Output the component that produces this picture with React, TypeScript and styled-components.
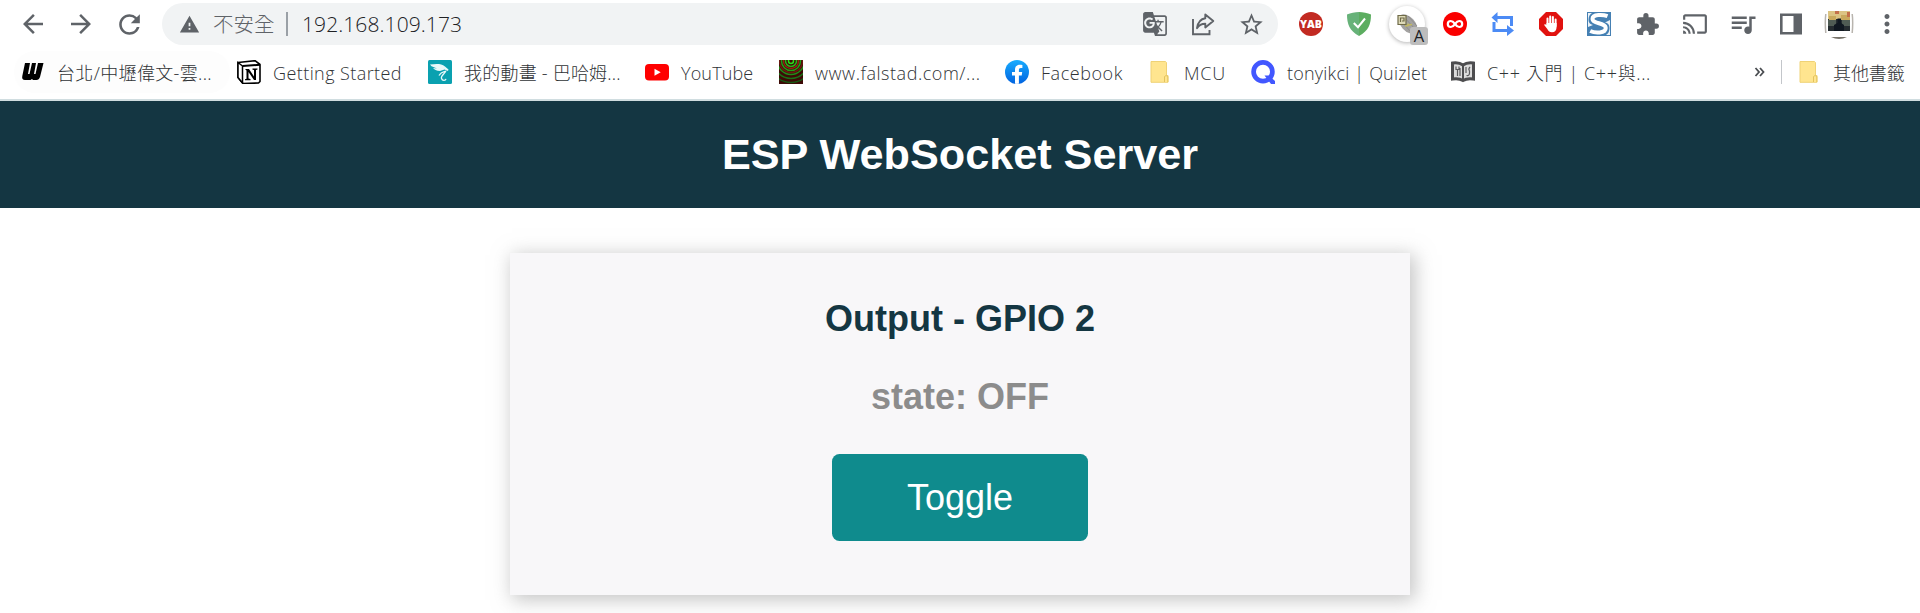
import React from 'react';
import styled, { createGlobalStyle } from 'styled-components';
import {
  MdArrowBack,
  MdArrowForward,
  MdRefresh,
  MdWarning,
  MdGTranslate,
  MdStarBorder,
  MdExtension,
  MdCast,
  MdQueueMusic,
  MdMoreVert,
} from 'react-icons/md';

const GlobalStyle = createGlobalStyle`
  * { box-sizing: border-box; }
  html, body { margin: 0; background: #fff; overflow: hidden; }
`;

const uiFont = `'Open Sans', 'Noto Sans CJK TC', sans-serif`;
const pageFont = `'Liberation Sans', Arial, sans-serif`;

const Window = styled.div`
  width: 1920px;
  height: 613px;
  display: flex;
  flex-direction: column;
  background: #fff;
  overflow: hidden;
`;

const Toolbar = styled.div`
  height: 48px;
  flex: none;
  display: flex;
  align-items: flex-start;
  padding-left: 9px;
  color: #5f6368;
`;

const ToolButton = styled.div`
  width: 48px;
  height: 48px;
  flex: none;
  display: flex;
  align-items: center;
  justify-content: center;
  svg { display: block; flex: none; }
`;

const AddressBar = styled.div`
  width: 1116px;
  height: 42px;
  flex: none;
  margin: 3px 9px 0 9px;
  padding-left: 17px;
  border-radius: 21px;
  background: #f1f3f4;
  display: flex;
  align-items: center;
`;

const SecurityText = styled.span`
  margin-left: 13px;
  width: 62px;
  font: 300 20.5px/40px ${uiFont};
  color: #5f6368;
  white-space: nowrap;
`;

const AddressDivider = styled.span`
  width: 2px;
  height: 24px;
  margin: 0 14px 0 11px;
  background: #9aa0a6;
`;

const Address = styled.span`
  flex: 1;
  font: 300 21px/40px ${uiFont};
  letter-spacing: 0.08px;
  color: #202124;
  white-space: nowrap;
`;

const BarActions = styled.div`
  display: flex;
  margin-right: 3px;
  height: 42px;
  align-items: center;
`;

const BookmarksBar = styled.div`
  height: 51px;
  flex: none;
  display: flex;
  align-items: center;
  padding-left: 14px;
  padding-bottom: 3px;
`;

const Bookmark = styled.div<{ $width: number; $active?: boolean }>`
  width: ${p => p.$width}px;
  height: 42px;
  flex: none;
  display: flex;
  align-items: center;
  gap: 12px;
  padding-left: 7px;
  border-radius: 21px;
  background: ${p => (p.$active ? '#fdfdfd' : 'transparent')};
  svg { display: block; flex: none; }
`;

const BookmarkLabel = styled.span<{ $spacing?: number }>`
  padding-top: 2px;
  font: 300 18px/30px ${uiFont};
  letter-spacing: ${p => p.$spacing ?? 0}px;
  color: #303336;
  white-space: nowrap;
`;

const Overflow = styled.div`
  width: 27px;
  margin-left: auto;
  svg { display: block; }
`;

const BarDivider = styled.div`
  width: 1px;
  height: 24px;
  margin-right: 8px;
  background: #c3c6ca;
`;

const Hairline = styled.div`
  height: 2px;
  flex: none;
  background: #d0dde0;
`;

const TopNav = styled.header`
  height: 107px;
  flex: none;
  display: flex;
  align-items: center;
  justify-content: center;
  background: #143642;
`;

const Title = styled.h1`
  margin: 0;
  padding-bottom: 2px;
  font: bold 43.2px/50px ${pageFont};
  color: #fff;
`;

const Content = styled.main`
  padding-top: 45px;
  display: flex;
  justify-content: center;
`;

const Card = styled.section`
  width: 900px;
  height: 342px;
  padding-top: 45px;
  display: flex;
  flex-direction: column;
  align-items: center;
  background: #f8f7f9;
  box-shadow: 3px 3px 18px 1.5px rgba(140, 140, 140, 0.5);
`;

const CardTitle = styled.h2`
  margin: 0;
  font: bold 36px/41px ${pageFont};
  color: #143642;
`;

const State = styled.p`
  margin: 37px 0 0;
  font: bold 36px/41px ${pageFont};
  color: #8c8c8c;
`;

const ToggleButton = styled.button`
  width: 256px;
  height: 87px;
  margin-top: 37px;
  padding: 0 0 1px;
  border: 0;
  border-radius: 7.5px;
  background: #0f8b8d;
  color: #fff;
  font: 36px/41px ${pageFont};
`;

const ExtensionBadge = styled.div`
  position: relative;
  width: 36px;
  height: 36px;
  display: flex;
  align-items: center;
  justify-content: center;
  border-radius: 50%;
  background: #fff;
  box-shadow: 0 1px 4px rgba(0, 0, 0, 0.3);
`;

const BadgeLetter = styled.span`
  position: absolute;
  left: 21px;
  top: 21px;
  width: 18px;
  height: 18px;
  border-radius: 3px;
  background: #bdbdbd;
  color: #202124;
  font: 16.5px/18px ${uiFont};
  text-align: center;
`;

const ShareIcon = () => (
  <svg width="24" height="24" viewBox="0 0 24 24" fill="none" stroke="#5f6368" strokeWidth="1.9">
    <path d="M2 7V22.2H18.5V18" />
    <path d="M14.3 2.5L22.3 9L14.3 15.5V11.8C10.5 11.8 8 13 6 16.2C6.8 10.8 9.3 7 14.3 6.3Z" strokeLinejoin="round" />
  </svg>
);

const YabIcon = () => (
  <svg width="24" height="24" viewBox="0 0 24 24">
    <circle cx="12" cy="12" r="12" fill="#c22a22" />
    <text x="12" y="16" textAnchor="middle" textLength="22" lengthAdjust="spacingAndGlyphs" fontFamily="Open Sans, sans-serif" fontWeight="800" fontSize="10.5" fill="#fff">YAB</text>
  </svg>
);

const ShieldIcon = () => (
  <svg width="24" height="24" viewBox="0 0 24 24">
    <path d="M12 0C8 0 3.500 1 0 2.500C0 12 2.500 19 12 24Z" fill="#67b279" />
    <path d="M12 0C16 0 20.500 1 24 2.500C24 12 21.500 19 12 24Z" fill="#5cad60" />
    <path d="M6.800 11L11 15.200L18 6.500" fill="none" stroke="#fff" strokeWidth="2" />
  </svg>
);

const CircuitIcon = () => (
  <svg width="24" height="24" viewBox="0 0 24 24">
    <ellipse cx="13" cy="12" rx="11.500" ry="7" transform="rotate(48 13 12)" fill="#a3a2a1" />
    <path d="M9 5L20 17M13 4L22 14M7 10L16 20" stroke="#8a8886" strokeWidth="0.800" />
    <path d="M3 3.500H11V12.500H3Z" fill="#dedab8" stroke="#6f6b48" strokeWidth="1.200" />
    <path d="M5.500 10V6H9V9H7" fill="none" stroke="#6f6b48" strokeWidth="1.200" />
    <path d="M10 14L13 13.500V11.500M13 13L17 12.500" fill="none" stroke="#c2b963" strokeWidth="1.500" />
  </svg>
);

const InfinityIcon = () => (
  <svg width="24" height="24" viewBox="0 0 24 24">
    <circle cx="12" cy="12" r="12" fill="#fa0000" />
    <path d="M12 12C10.500 9.900 9.300 9 7.800 9A3 3 0 0 0 7.800 15C9.300 15 10.500 14.100 12 12C13.500 9.900 14.700 9 16.200 9A3 3 0 0 1 16.200 15C14.700 15 13.500 14.100 12 12Z" fill="none" stroke="#fff" strokeWidth="2.200" />
  </svg>
);

const LoopIcon = () => (
  <svg width="24" height="24" viewBox="0 0 24 24" fill="none" stroke="#4c8bf5" strokeWidth="3">
    <path d="M5 5.500H20.500V14M3 10V18.500H17" />
    <path d="M6.500 0V11L0.500 5.500ZM16 13V24L23 18.500Z" fill="#4c8bf5" stroke="none" />
  </svg>
);

const StopHandIcon = () => (
  <svg width="24" height="24" viewBox="0 0 24 24">
    <path d="M7 0H17L24 7V17L17 24H7L0 17V7Z" fill="#e1120f" />
    <g stroke="#fff" strokeWidth="2" strokeLinecap="round">
      <path d="M8.500 13V6.500M11.200 12V4.500M13.900 12V5M16.600 14V7.500" />
    </g>
    <path d="M7.500 11H17.600V15C17.600 18.500 15.800 20.300 13 20.300C10.500 20.300 9.600 19.200 8.300 17L5 12.800C5.500 11.800 6.800 12 7.500 13Z" fill="#fff" />
  </svg>
);

const SIcon = () => (
  <svg width="24" height="24" viewBox="0 0 24 24">
    <rect width="24" height="24" fill="#4580b3" />
    <path d="M1 1H5Q1.500 3 1.500 8Q1.500 12 6 13L1 15ZM23 23H19Q22.500 21 22.500 16Q22.500 11 18 10.500L23 8Z" fill="#fff" opacity="0.900" />
    <path d="M20.500 4.200C16.500 2.600 5.500 1.700 5.500 7C5.500 12.300 18.700 10.300 18.700 16C18.700 21.500 8 21.300 3.200 19" fill="none" stroke="#fff" strokeWidth="4" />
  </svg>
);

const PanelIcon = () => (
  <svg width="22" height="22" viewBox="0 0 22 22">
    <path d="M1.300 1.800H20.700V20.200H1.300Z" fill="none" stroke="#5f6368" strokeWidth="2.600" />
    <rect x="13.500" y="1" width="7.500" height="20" fill="#5f6368" />
  </svg>
);

const AvatarIcon = () => (
  <svg width="30" height="32" viewBox="0 0 30 32">
    <path d="M1.800 6Q0.800 14 1.800 25M28.200 6Q29.200 14 28.200 25" fill="none" stroke="#b8b4ae" strokeWidth="1.500" />
    <path d="M7 29Q15 33 23 29Z" fill="#77736a" />
    <rect x="4" y="3" width="22" height="20" fill="#252c30" />
    <rect x="4" y="3" width="22" height="8" fill="#dcc483" />
    <path d="M5 8H12V12H5ZM17 7H26V12H17Z" fill="#c9a95c" />
    <path d="M4 12H12V18H4ZM18 12H26V18H18Z" fill="#505c54" />
    <path d="M10 23V17L13.500 15V10.500H17V15L20 17V23Z" fill="#101821" />
    <path d="M11 3H15V6H11ZM23 4H26V9H23Z" fill="#c4704a" />
  </svg>
);

const SlantedWIcon = () => (
  <svg width="24" height="24" viewBox="0 0 24 24">
    <path d="M4 3H9L7 14H8.500L11 3H15L13 14H14.500L17 3H22.500L19 17Q18 20 15.500 20H12L11 19L9.500 20H4Q0.500 20 1.300 16Z" fill="#000" />
  </svg>
);

const NotionIcon = () => (
  <svg width="24" height="24" viewBox="0 0 24 24">
    <path d="M1 2.500L18 0.700L23 4.500V21.500L21.500 23L6 23.500L1 17.500Z" fill="#fff" stroke="#000" strokeWidth="1.600" strokeLinejoin="round" />
    <path d="M1 2.500L5.500 6V23L1 17.500Z" fill="#fff" stroke="#000" strokeWidth="1.500" />
    <path d="M5.500 6L23 4.800" stroke="#000" strokeWidth="2" />
    <path d="M8 9H12L17 16.500V10L15.500 9.700V8.500H20.500V9.500L19 10V20H17L11.500 12V18.500L13.500 19V20.200H8V19.300L9.500 18.700V10.500Z" fill="#000" />
  </svg>
);

const DragonIcon = () => (
  <svg width="24" height="24" viewBox="0 0 24 24">
    <rect width="24" height="24" rx="1.500" fill="#0aa1b0" />
    <path d="M2 4.500C7 4 13 3 17 6.500L20.500 9.500L20 11L16.500 9.500L12 11C8.500 11 6 9.500 5 8L9 8.500L3.500 6.200Z" fill="#e8f8f8" />
    <path d="M18 10.500C17.500 13.500 12.500 15.500 13.500 18.500C14.300 21 17.500 21 18 18.800M11 15.500C13 12 15 12 17 11.500" fill="none" stroke="#e8f8f8" strokeWidth="1.300" />
  </svg>
);

const YouTubeIcon = () => (
  <svg width="24" height="24" viewBox="0 0 24 24">
    <rect y="4" width="24" height="16.500" rx="4" fill="#f00" />
    <path d="M9.500 8.700V15.700L15.700 12.200Z" fill="#fff" />
  </svg>
);

const RippleIcon = () => (
  <svg width="24" height="24" viewBox="0 0 24 24">
    <rect width="24" height="24" fill="#3d0a06" />
    <g fill="none" strokeWidth="1.500">
      <circle cx="12" cy="1" r="2.500" stroke="#26e01a" />
      <circle cx="12" cy="1" r="5.500" stroke="#23b51a" />
      <circle cx="12" cy="1" r="7.500" stroke="#8f2413" />
      <circle cx="12" cy="1" r="9.500" stroke="#1f9f18" />
      <circle cx="12" cy="1" r="11.500" stroke="#6b1a10" />
      <circle cx="12" cy="1" r="13.500" stroke="#1f8c18" />
      <circle cx="12" cy="1" r="17.500" stroke="#1a7016" />
      <circle cx="12" cy="1" r="21.500" stroke="#175813" />
    </g>
  </svg>
);

const FacebookIcon = () => (
  <svg width="24" height="24" viewBox="0 0 24 24">
    <defs>
      <linearGradient id="fb" x1="0" y1="0" x2="0" y2="1">
        <stop offset="0" stopColor="#18acfe" />
        <stop offset="1" stopColor="#0163e0" />
      </linearGradient>
    </defs>
    <circle cx="12" cy="12" r="12" fill="url(#fb)" />
    <path d="M16.700 15.500L17.200 12H13.900V9.800C13.900 8.800 14.400 7.900 15.900 7.900H17.400V5C16.600 4.850 15.700 4.750 14.800 4.750C11.900 4.750 10 6.500 10 9.500V12H7V15.500H10V23.850C11.200 24.050 12.700 24.050 13.900 23.850V15.500Z" fill="#fff" />
  </svg>
);

const FolderIcon = () => (
  <svg width="24" height="24" viewBox="0 0 24 24">
    <path d="M3 1.500H17.500L18.500 2.500V15.500H20V22.300H3Z" fill="#ffe58f" stroke="#efd276" strokeWidth="1" />
    <path d="M16.500 22V16.500Q18 14.500 19.800 16.500V22" fill="#ffe58f" stroke="#e3c35d" strokeWidth="1" />
  </svg>
);

const QuizletIcon = () => (
  <svg width="24" height="24" viewBox="0 0 24 24">
    <circle cx="12" cy="11.800" r="9.400" fill="none" stroke="#4257ff" strokeWidth="4.700" />
    <path d="M13.500 15.500H18L24 21V24H20Z" fill="#4257ff" />
  </svg>
);

const BookIcon = () => (
  <svg width="24" height="24" viewBox="0 0 24 24">
    <path d="M1.500 3Q8 2 12 5Q16 2 22.500 3V19Q16 18 12 20.500Q8 18 1.500 19Z" fill="#dcdcdc" stroke="#4d4d4f" strokeWidth="3" />
    <path d="M12 5V21" stroke="#4d4d4f" strokeWidth="2" />
    <path d="M6.500 16V10M9 16V8M5 6.500V9.500H8V6.500M15.500 15.500Q18.500 16 18.500 13V11Q17 9 19 7M15 7V13" fill="none" stroke="#5a5a5c" strokeWidth="1.200" />
  </svg>
);

const ChevronsIcon = () => (
  <svg width="12" height="12" viewBox="0 0 12 12" fill="none" stroke="#4a4d51" strokeWidth="1.800">
    <path d="M1.500 2L5 6L1.500 10M6 2L9.500 6L6 10" />
  </svg>
);

const bookmarks = [
  { label: '台北/中壢偉文-雲...', width: 216, icon: <SlantedWIcon />, spacing: 0.35, active: true },
  { label: 'Getting Started', width: 191, icon: <NotionIcon />, spacing: 0.42 },
  { label: '我的動畫 - 巴哈姆...', width: 217, icon: <DragonIcon />, spacing: 0.22 },
  { label: 'YouTube', width: 134, icon: <YouTubeIcon />, spacing: 0.15 },
  { label: 'www.falstad.com/...', width: 226, icon: <RippleIcon />, spacing: 0.54 },
  { label: 'Facebook', width: 143, icon: <FacebookIcon />, spacing: 0.55 },
  { label: 'MCU', width: 103, icon: <FolderIcon />, spacing: 0.8 },
  { label: 'tonyikci | Quizlet', width: 200, icon: <QuizletIcon />, spacing: 0.2 },
  { label: 'C++ 入門 | C++與...', width: 220, icon: <BookIcon />, spacing: 0.62 },
];

export default function App() {
  return (
    <Window>
      <GlobalStyle />
      <Toolbar>
        <ToolButton><MdArrowBack size={30} /></ToolButton>
        <ToolButton><MdArrowForward size={30} /></ToolButton>
        <ToolButton><MdRefresh size={31} /></ToolButton>
        <AddressBar>
          <MdWarning size={21} />
          <SecurityText>不安全</SecurityText>
          <AddressDivider />
          <Address>192.168.109.173</Address>
          <BarActions>
            <ToolButton><MdGTranslate size={26} /></ToolButton>
            <ToolButton><ShareIcon /></ToolButton>
            <ToolButton><MdStarBorder size={27} /></ToolButton>
          </BarActions>
        </AddressBar>
        <ToolButton><YabIcon /></ToolButton>
        <ToolButton><ShieldIcon /></ToolButton>
        <ToolButton>
          <ExtensionBadge>
            <CircuitIcon />
            <BadgeLetter>A</BadgeLetter>
          </ExtensionBadge>
        </ToolButton>
        <ToolButton><InfinityIcon /></ToolButton>
        <ToolButton><LoopIcon /></ToolButton>
        <ToolButton><StopHandIcon /></ToolButton>
        <ToolButton><SIcon /></ToolButton>
        <ToolButton><MdExtension size={25} /></ToolButton>
        <ToolButton><MdCast size={26} /></ToolButton>
        <ToolButton><MdQueueMusic size={30} /></ToolButton>
        <ToolButton><PanelIcon /></ToolButton>
        <ToolButton><AvatarIcon /></ToolButton>
        <ToolButton><MdMoreVert size={30} /></ToolButton>
      </Toolbar>
      <BookmarksBar>
        {bookmarks.map(b => (
          <Bookmark key={b.label} $width={b.width} $active={b.active}>
            {b.icon}
            <BookmarkLabel $spacing={b.spacing}>{b.label}</BookmarkLabel>
          </Bookmark>
        ))}
        <Overflow><ChevronsIcon /></Overflow>
        <BarDivider />
        <Bookmark $width={130}>
          <FolderIcon />
          <BookmarkLabel $spacing={-0.1}>其他書籤</BookmarkLabel>
        </Bookmark>
      </BookmarksBar>
      <Hairline />
      <TopNav>
        <Title>ESP WebSocket Server</Title>
      </TopNav>
      <Content>
        <Card>
          <CardTitle>Output - GPIO 2</CardTitle>
          <State>state: OFF</State>
          <ToggleButton>Toggle</ToggleButton>
        </Card>
      </Content>
    </Window>
  );
}
